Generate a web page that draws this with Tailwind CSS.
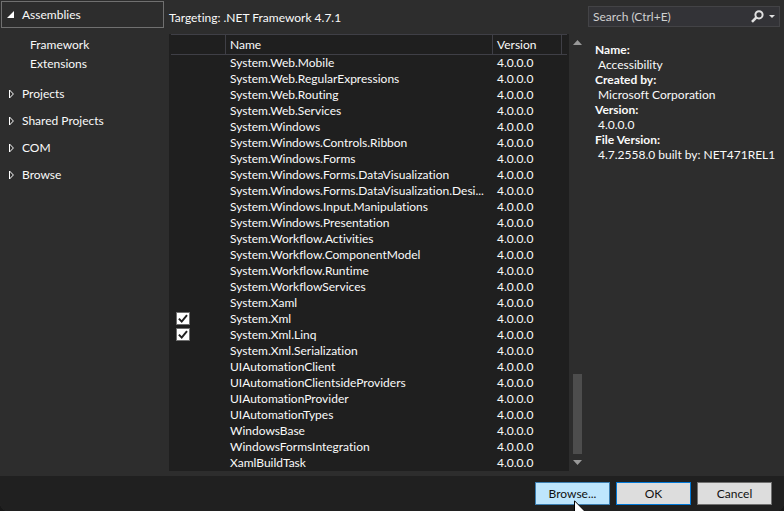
<!DOCTYPE html>
<html lang="en">
<head>
<meta charset="utf-8">
<title>Reference Manager</title>
<script src="https://cdn.jsdelivr.net/npm/@tailwindcss/browser@4"></script>
</head>
<body class="bg-[#181818]">
<div class="flex min-h-screen flex-col overflow-hidden rounded-b-lg bg-[#2d2d2d] font-['Lato','Open_Sans',sans-serif] text-[12px] leading-4 text-[#fafafa] [font-variant-ligatures:none]">
  <div class="flex flex-1 pb-[5px]">
    <nav class="w-[169px] shrink-0 pl-px pr-[5px] pt-px">
      <button class="flex h-[27px] w-full items-center border border-[#707070] pl-[5px] text-left">
        <svg class="mr-2 h-[7px] w-[7px]" viewBox="0 0 7 7"><path d="M7 0V7H0Z" fill="#fff"/></svg>Assemblies
      </button>
      <ul class="pl-[29px] pt-[7px] leading-[19px]">
        <li><a href="#framework">Framework</a></li>
        <li><a href="#extensions">Extensions</a></li>
      </ul>
      <div class="pl-2 pt-[7px]">
        <button class="flex h-[27px] items-center"><svg class="mr-2 h-[10px] w-[5px]" viewBox="0 0 5 10"><path d="M.5 1V9L4.4 5Z" fill="none" stroke="#fff"/></svg>Projects</button>
        <button class="flex h-[27px] items-center"><svg class="mr-2 h-[10px] w-[5px]" viewBox="0 0 5 10"><path d="M.5 1V9L4.4 5Z" fill="none" stroke="#fff"/></svg>Shared Projects</button>
        <button class="flex h-[27px] items-center"><svg class="mr-2 h-[10px] w-[5px]" viewBox="0 0 5 10"><path d="M.5 1V9L4.4 5Z" fill="none" stroke="#fff"/></svg>COM</button>
        <button class="flex h-[27px] items-center"><svg class="mr-2 h-[10px] w-[5px]" viewBox="0 0 5 10"><path d="M.5 1V9L4.4 5Z" fill="none" stroke="#fff"/></svg>Browse</button>
      </div>
    </nav>
    <main class="flex min-w-0 flex-1 flex-col">
      <h1 class="flex h-[34px] items-center pt-0.5">Targeting: .NET Framework 4.7.1</h1>
      <div class="flex flex-1">
        <div class="min-w-0 flex-1 bg-[#1f1f1f] px-0.5">
          <table class="w-full table-fixed border-separate border-spacing-0 text-left">
            <colgroup><col class="w-[55px]"><col><col class="w-[69px]"><col class="w-[5px]"></colgroup>
            <thead>
              <tr class="h-[21px]">
                <th class="border-y border-r border-[#3f3f46] font-normal" aria-label="Selected"></th>
                <th class="border-y border-r border-[#3f3f46] pl-1 font-normal">Name</th>
                <th class="border-y border-r border-[#3f3f46] pl-1 font-normal">Version</th>
                <th class="border-y border-[#3f3f46]" aria-hidden="true"></th>
              </tr>
            </thead>
            <tbody id="rows"></tbody>
          </table>
        </div>
        <div class="flex w-[17px] flex-col items-center pb-1.5 pt-1.5" aria-hidden="true">
          <svg class="h-[5px] w-[9px]" viewBox="0 0 9 5"><path d="M0 5L4.5 0L9 5Z" fill="#999"/></svg>
          <div class="flex w-full flex-1 flex-col justify-end pb-1.5 pt-2"><div class="mx-auto h-20 w-[9px] bg-[#4d4d4d]"></div></div>
          <svg class="h-[5px] w-[9px]" viewBox="0 0 9 5"><path d="M0 0L4.5 5L9 0Z" fill="#999"/></svg>
        </div>
      </div>
    </main>
    <aside class="w-[198px] shrink-0 pl-0.5 pr-1 pt-1.5">
      <div class="flex h-[21px] items-center border border-[#434346] bg-[#333337] pl-1 pr-1">
        <input type="text" aria-label="Search" placeholder="Search (Ctrl+E)" class="min-w-0 flex-1 bg-transparent outline-none placeholder:text-[#d0d0d0]">
        <button aria-label="Search"><svg class="h-[13px] w-[13px]" viewBox="0 0 13 13" fill="none" stroke="#e0e0e0"><circle cx="8" cy="4.8" r="3.6" stroke-width="2"/><path d="M5.4 7.4L1 11.8" stroke-width="2.6"/></svg></button>
        <button aria-label="Search options" class="ml-[5px]"><svg class="h-[3px] w-[6px]" viewBox="0 0 6 3"><path d="M0 0H6L3 3Z" fill="#e0e0e0"/></svg></button>
      </div>
      <dl class="pl-[7px] pt-[15px] leading-[15px] whitespace-nowrap">
        <dt class="font-bold">Name:</dt><dd class="pl-[3px]">Accessibility</dd>
        <dt class="font-bold">Created by:</dt><dd class="pl-[3px]">Microsoft Corporation</dd>
        <dt class="font-bold">Version:</dt><dd class="pl-[3px]">4.0.0.0</dd>
        <dt class="font-bold">File Version:</dt><dd class="pl-[3px]">4.7.2558.0 built by: NET471REL1</dd>
      </dl>
    </aside>
  </div>
  <footer class="flex h-[35px] justify-end gap-1.5 bg-[#202020] pr-3 pt-1.5 text-[#111]">
    <div class="relative h-[23px] w-[75px]">
      <button class="h-full w-full border border-[#3c7fb1] bg-[#bee6fd]">Browse...</button>
      <svg class="pointer-events-none absolute left-[39px] top-[18px] h-[19px] w-[12px]" viewBox="0 0 12 19"><path d="M.5 .8V16.5L4.2 13L6.6 18.4L9 17.3L6.7 12H11.6Z" fill="#fff" stroke="#000"/></svg>
    </div>
    <button class="h-[23px] w-[75px] border border-[#0078d7] bg-[#ddd]">OK</button>
    <button class="h-[23px] w-[75px] border border-[#707070] bg-[#ddd]">Cancel</button>
  </footer>
</div>
<script>
const names = ["System.Web.Mobile","System.Web.RegularExpressions","System.Web.Routing","System.Web.Services","System.Windows","System.Windows.Controls.Ribbon","System.Windows.Forms","System.Windows.Forms.DataVisualization","System.Windows.Forms.DataVisualization.Desi...","System.Windows.Input.Manipulations","System.Windows.Presentation","System.Workflow.Activities","System.Workflow.ComponentModel","System.Workflow.Runtime","System.WorkflowServices","System.Xaml","System.Xml","System.Xml.Linq","System.Xml.Serialization","UIAutomationClient","UIAutomationClientsideProviders","UIAutomationProvider","UIAutomationTypes","WindowsBase","WindowsFormsIntegration","XamlBuildTask"];
const checked = ["System.Xml", "System.Xml.Linq"];
document.getElementById("rows").innerHTML = names.map(n => `<tr class="h-4">
  <td>${checked.includes(n) ? `<label class="relative mb-px ml-[5px] block h-[13px] w-[14px]"><input type="checkbox" checked aria-label="${n}" class="block h-[13px] w-[14px] appearance-none border border-[#707070] bg-white"><svg class="pointer-events-none absolute inset-0 h-[13px] w-[14px]" viewBox="0 0 14 13"><path d="M2.9 6.6L5.7 9.6L11 3.2" fill="none" stroke="#212121" stroke-width="2"/></svg></label>` : ""}</td>
  <td class="whitespace-nowrap pl-1">${n}</td><td class="pl-1">4.0.0.0</td><td></td></tr>`).join("");
</script>
</body>
</html>
